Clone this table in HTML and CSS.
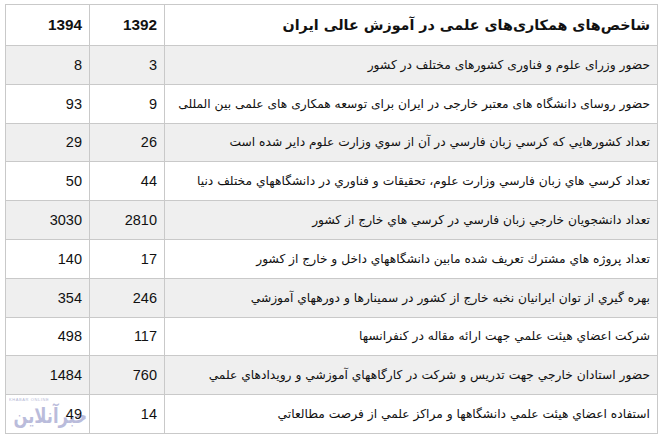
FILE: index.html
```html
<!DOCTYPE html>
<html lang="fa">
<head>
<meta charset="utf-8">
<link rel="stylesheet" href="styles.css">
</head>
<body>
<div class="page">
  <table class="stats" dir="rtl">
    <colgroup>
      <col class="c-label">
      <col class="c-num2">
      <col class="c-num1">
    </colgroup>
    <thead>
      <tr class="head">
        <th class="label">شاخص‌های همکاری‌های علمی در آموزش عالی ایران</th>
        <th class="num">1392</th>
        <th class="num">1394</th>
      </tr>
    </thead>
    <tbody>
      <tr class="odd"><td class="label">حضور وزرای علوم و فناوری کشورهای مختلف در کشور</td><td class="num">3</td><td class="num">8</td></tr>
      <tr><td class="label">حضور روسای دانشگاه های معتبر خارجی در ایران برای توسعه همکاری های علمی بین المللی</td><td class="num">9</td><td class="num">93</td></tr>
      <tr class="odd"><td class="label">تعداد كشورهايي كه كرسي زبان فارسي در آن از سوي وزارت علوم داير شده است</td><td class="num">26</td><td class="num">29</td></tr>
      <tr><td class="label">تعداد كرسي هاي زبان فارسي وزارت علوم، تحقيقات و فناوري در دانشگاههاي مختلف دنيا</td><td class="num">44</td><td class="num">50</td></tr>
      <tr class="odd"><td class="label">تعداد دانشجويان خارجي زبان فارسي در كرسي هاي خارج از كشور</td><td class="num">2810</td><td class="num">3030</td></tr>
      <tr><td class="label">تعداد پروژه هاي مشترك تعريف شده مابين دانشگاههاي داخل و خارج از كشور</td><td class="num">17</td><td class="num">140</td></tr>
      <tr class="odd"><td class="label">بهره گيري از توان ايرانيان نخبه خارج از كشور در سمينارها و دورههاي آموزشي</td><td class="num">246</td><td class="num">354</td></tr>
      <tr><td class="label">شركت اعضاي هيئت علمي جهت ارائه مقاله در كنفرانسها</td><td class="num">117</td><td class="num">498</td></tr>
      <tr class="odd"><td class="label">حضور استادان خارجي جهت تدريس و شركت در كارگاههاي آموزشي و رويدادهاي علمي</td><td class="num">760</td><td class="num">1484</td></tr>
      <tr><td class="label">استفاده اعضاي هيئت علمي دانشگاهها و مراكز علمي از فرصت مطالعاتي</td><td class="num">14</td><td class="num logo-cell"><span class="logo" aria-hidden="true"><span class="logo-en">KHABAR ONLINE</span><span class="logo-fa">خبرآنلاین</span></span><span class="val">49</span></td></tr>
    </tbody>
  </table>
</div>
</body>
</html>
```
FILE: styles.css
```css
html, body {
  margin: 0;
  padding: 0;
  background: #ffffff;
}

.page {
  padding: 4px 0 0 5px;
}

.stats {
  width: 652px;
  border-collapse: collapse;
  table-layout: fixed;
  color: #111111;
}

.c-label { width: 493px; }
.c-num2 { width: 75px; }
.c-num1 { width: 84px; }

.stats th,
.stats td {
  border: 1px solid #c9c9c9;
  padding: 0 7px;
  vertical-align: middle;
}

.head { height: 41px; }
.stats tbody tr { height: 38.8px; }
.stats tr.odd { background: #efefef; }

.label {
  text-align: right;
  font-family: "DejaVu Sans", "Liberation Sans", sans-serif;
  font-size: 12.25px;
  font-weight: normal;
  white-space: nowrap;
  overflow: hidden;
}

.head .label {
  font-size: 14.3px;
  font-weight: bold;
}

.num {
  direction: ltr;
  text-align: right;
  font-family: "Liberation Sans", Arial, sans-serif;
  font-size: 14.5px;
  font-weight: normal;
}

.head .num {
  font-size: 15.3px;
  font-weight: bold;
}

.logo-cell {
  position: relative;
}

.logo {
  position: absolute;
  left: 0;
  top: 2px;
  width: 88px;
  height: 36px;
  display: flex;
  flex-direction: column;
  align-items: center;
  opacity: 0.75;
}

.logo-en {
  align-self: flex-start;
  font-family: "Liberation Sans", sans-serif;
  font-size: 4px;
  letter-spacing: 0.6px;
  color: #9aa0c8;
  padding-left: 3px;
  line-height: 6px;
}

.logo-fa {
  display: block;
  font-family: "DejaVu Sans", sans-serif;
  font-weight: bold;
  font-size: 21px;
  line-height: 27px;
  color: #a4a6d0;
  direction: rtl;
  white-space: nowrap;
  transform: scaleX(0.78);
  transform-origin: center;
}

.val {
  position: relative;
}
```
